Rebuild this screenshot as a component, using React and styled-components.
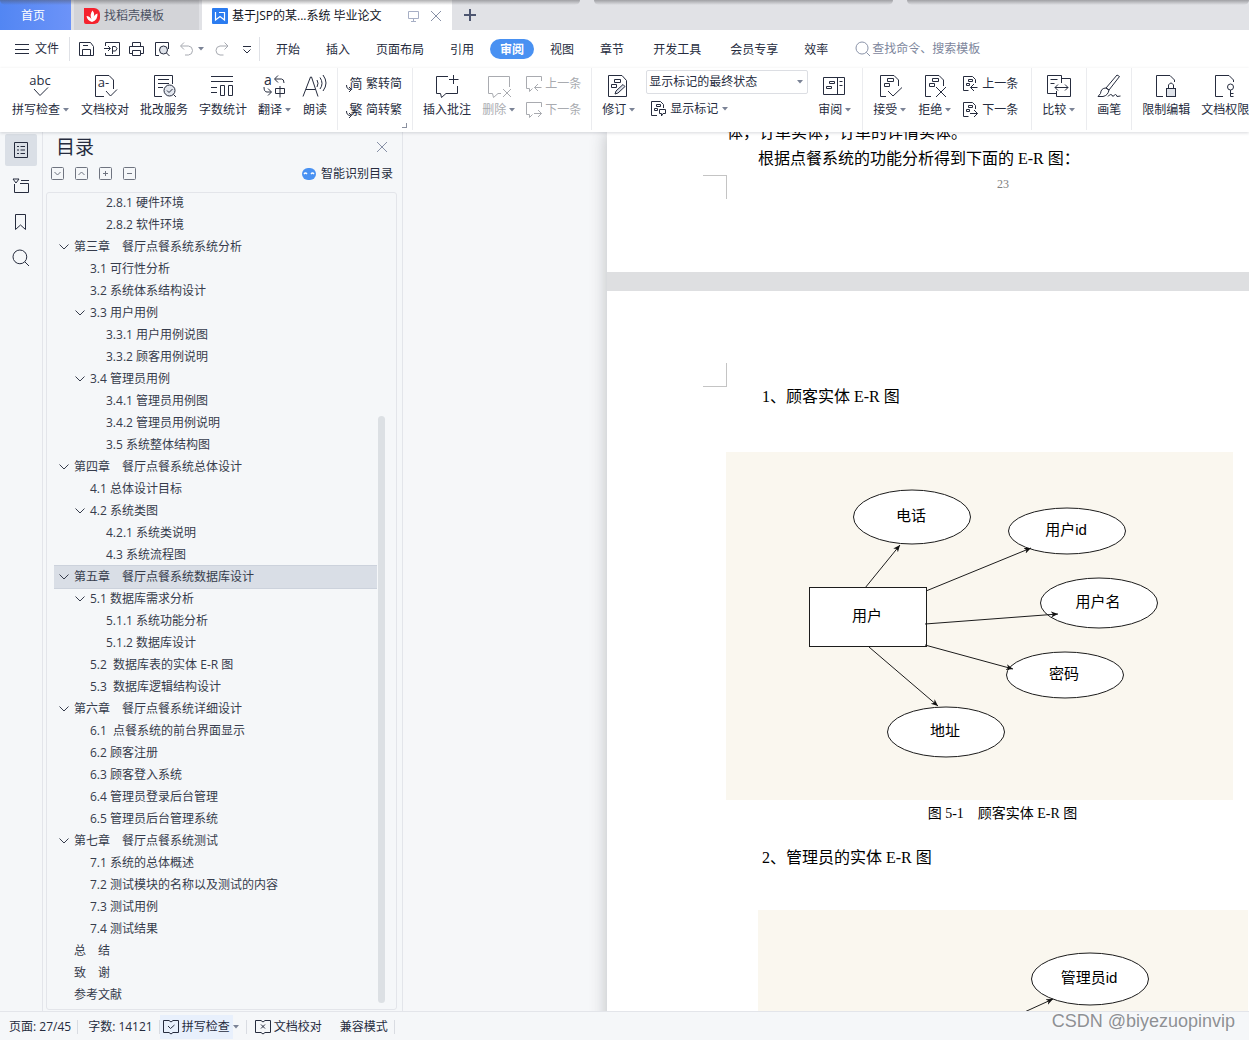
import { useState } from "react";
import styled, { createGlobalStyle, css } from "styled-components";

const GlobalStyle = createGlobalStyle`
  :root {
    --ink: #262c3e;
    --muted: #a9abb0;
    --line: #e3e5ea;
    --panel: #f5f7f9;
    --blue: #4991f2;
    --font-ui: "Open Sans", "Noto Sans CJK SC", sans-serif;
    --font-doc: "Liberation Serif", "Noto Sans CJK SC", serif;
  }

  * {
    box-sizing: border-box;
  }

  body {
    margin: 0;
    background: var(--panel);
    color: var(--ink);
    font-family: var(--font-ui);
    font-size: 12px;
    line-height: 16px;
  }

  button,
  input,
  select {
    margin: 0;
    padding: 0;
    border: 0;
    background: none;
    color: inherit;
    font: inherit;
  }

  button {
    white-space: nowrap;
    cursor: pointer;
  }

  ul,
  p,
  h1,
  h2,
  figure {
    margin: 0;
    padding: 0;
    font-weight: 400;
  }

  ul {
    list-style: none;
  }

  svg {
    display: block;
    flex: none;
    overflow: visible;
  }
`;

const Layout = styled.div`
  display: flex;
  flex-direction: column;
  height: 100vh;
  overflow: hidden;
  position: relative;
`;

/* window tabs */

const TabBar = styled.header`
  display: flex;
  flex: none;
  height: 30px;
  background: #e1e2e6;
`;

const HomeTab = styled.button`
  width: 71px;
  padding: 2px 5px 0 0;
  background: linear-gradient(90deg, #5286f3, #6c93f8);
  color: #fff;
`;

const DocTab = styled.div`
  display: flex;
  align-items: center;
  gap: 4px;
  padding: 2px 10px 0;
  white-space: nowrap;

  ${({ $active }) =>
    $active
      ? css`
          width: 250px;
          background: #fff;
          color: #10131c;
        `
      : css`
          width: 125px;
          margin: 0 3px;
          background: #d3d4d8;
          color: #4c5263;
        `}

  button:nth-of-type(1) {
    margin-left: auto;
  }

  button + button {
    margin-left: 6px;
  }
`;

const AddTab = styled.button`
  width: 36px;
  display: flex;
  align-items: center;
  justify-content: center;
`;

const TopShade = styled.div`
  position: absolute;
  inset: 0 0 auto;
  display: flex;
  gap: 14px;
  pointer-events: none;

  span {
    height: 5px;
    border-radius: 0 0 6px 6px;
    background: linear-gradient(rgba(80, 80, 84, 0.45), rgba(80, 80, 84, 0));
  }
`;

/* menu */

const MenuBar = styled.nav`
  display: flex;
  flex: none;
  align-items: center;
  height: 38px;
  padding-left: 15px;
  background: #fff;
`;

const MenuSep = styled.span`
  width: 1px;
  height: 24px;
  background: #dfe1e6;
`;

const FileButton = styled.button`
  display: flex;
  align-items: center;
  gap: 6px;
  margin-right: 10px;
`;

const QuickTools = styled.div`
  display: flex;
  align-items: center;
  gap: 9px;
  padding: 0 4px 0 9px;

  button {
    display: flex;
    align-items: center;
    gap: 3px;
  }
`;

const MenuTabs = styled.div`
  display: flex;
  gap: 6px;
  padding-left: 6px;
`;

const MenuTab = styled.button`
  height: 20px;
  margin-left: ${({ $spaced }) => ($spaced ? 3 : 0)}px;
  padding: 2px 10px 0;
  border-radius: 10px;

  ${({ $active }) =>
    $active &&
    css`
      background: var(--blue);
      color: #fff;
      font-weight: 700;
    `}
`;

const Search = styled.label`
  display: flex;
  flex: 1;
  align-items: center;
  gap: 2px;
  margin-left: 18px;

  input {
    flex: 1;
    min-width: 0;
    outline: 0;
  }

  input::placeholder {
    color: #7d869c;
    opacity: 1;
  }
`;

/* ribbon */

const RibbonBar = styled.div`
  display: flex;
  flex: none;
  height: 64px;
  padding-left: 2px;
  overflow: hidden;
  background: #fff;
`;

const RibbonWrap = styled.div`
  position: relative;
  z-index: 1;
  flex: none;
  background: #fff;
  box-shadow: 0 1px 3px rgba(60, 66, 80, 0.2);
`;

const Group = styled.div`
  position: relative;
  display: flex;
  flex: none;
  gap: ${({ $gap }) => $gap || 11}px;
  height: 62px;
  padding: 0 ${({ $end }) => $end || 10}px 0 10px;
  border-right: 1px solid #ebecef;

  &:last-child {
    border-right: 0;
  }
`;

const BigButton = styled.button`
  display: flex;
  flex-direction: column;
  align-items: center;
  gap: 4px;
  padding-top: 6px;
  color: ${({ disabled }) => (disabled ? "var(--muted)" : "inherit")};

  span {
    display: flex;
    align-items: center;
    gap: 3px;
  }
`;

const Stack = styled.div`
  display: flex;
  flex-direction: column;
  padding-top: 2px;
`;

const SmallButton = styled.button`
  display: flex;
  align-items: center;
  gap: 4px;
  height: 26px;
  padding-top: 1px;
  padding-left: ${({ $inset }) => ($inset ? 5 : 0)}px;
  color: ${({ disabled }) => (disabled ? "var(--muted)" : "inherit")};
`;

const SelectBox = styled.label`
  display: flex;
  align-items: center;
  width: 162px;
  height: 24px;
  margin-bottom: 1px;
  padding-right: 3px;
  border: 1px solid #dcdee3;
  border-radius: 2px;

  select {
    flex: 1;
    height: 22px;
    padding-left: 2px;
    appearance: none;
    outline: 0;
  }
`;

const CornerMark = styled.i`
  position: absolute;
  right: 5px;
  bottom: 2px;
  width: 5px;
  height: 5px;
  border: solid #8a909f;
  border-width: 0 1px 1px 0;
`;

/* body */

const Main = styled.main`
  display: flex;
  flex: 1;
  min-height: 0;
`;

const Rail = styled.aside`
  display: flex;
  flex: none;
  flex-direction: column;
  gap: 4px;
  width: 43px;
  padding: 2px 5px;
  border-right: 1px solid var(--line);
`;

const RailButton = styled.button`
  display: grid;
  place-items: center;
  width: 32px;
  height: 32px;
  border-radius: 2px;
  background: ${({ $active }) => ($active ? "#dadfe6" : "none")};
`;

const Outline = styled.section`
  display: flex;
  flex: none;
  flex-direction: column;
  width: 360px;
  padding: 0 5px 0 3px;
  border-right: 1px solid var(--line);
`;

const OutlineHead = styled.div`
  display: flex;
  align-items: center;
  justify-content: space-between;
  height: 30px;
  padding: 0 9px 0 10px;

  h2 {
    font-size: 19px;
    line-height: 28px;
  }
`;

const OutlineTools = styled.div`
  display: flex;
  align-items: center;
  gap: 10px;
  height: 24px;
  margin-bottom: 6px;
  padding: 0 4px 0 5px;
`;

const SmartButton = styled.button`
  display: flex;
  align-items: center;
  gap: 5px;
  margin-left: auto;
`;

const TreeBox = styled.div`
  display: flex;
  flex: 1;
  min-height: 0;
  margin-bottom: 1px;
  padding-left: 7px;
  border: 1px solid var(--line);
  border-radius: 3px;
  overflow: hidden;
`;

const Tree = styled.ul`
  flex: 1;
  margin-top: -1px;
`;

const TreeRow = styled.button`
  display: flex;
  align-items: center;
  gap: 4px;
  width: 100%;
  height: 22px;
  padding-left: ${({ $level }) => 4 + $level * 16}px;
  white-space: pre;
  color: #363c4c;
  background: ${({ $active }) => ($active ? "#d9dee6" : "none")};
  box-shadow: ${({ $active }) =>
    $active ? "0 1px #ccd2dc, 0 -1px #ccd2dc" : "none"};
`;

const Twisty = styled.span`
  display: grid;
  place-items: center;
  width: 12px;
`;

const Track = styled.div`
  display: flex;
  flex-direction: column;
  justify-content: flex-end;
  width: 19px;
  padding: 0 11px 6px 1px;

  span {
    height: 72.5%;
    border-radius: 4px;
    background: #dce0e4;
  }
`;

/* document */

const Canvas = styled.section`
  flex: 1;
  min-width: 0;
  padding-left: 204px;
  overflow: hidden;
  background: #f6f7f9;
`;

const Sheets = styled.div`
  display: flex;
  flex-direction: column;
  gap: 19px;
  width: 792px;
  background: #dedfe1;
  box-shadow: 0 0 16px rgba(60, 64, 72, 0.32);
`;

const Sheet = styled.article`
  padding: ${({ $top }) => $top}px 120px ${({ $bottom }) => $bottom}px;
  overflow: hidden;
  background: #fff;
  color: #000;
  font-family: var(--font-doc);
  font-size: 16px;
  line-height: 26px;
  white-space: nowrap;
`;

const Body = styled.div`
  margin: -12px 0 3px;

  p + p {
    padding-left: 31px;
  }
`;

const MarginRow = styled.div`
  display: flex;
  margin-left: -24px;
  color: #808080;
  font-size: 12px;
  line-height: 18px;
  text-align: center;

  span {
    flex: 1;
  }
`;

const CropMark = styled.i`
  width: 24px;
  height: 24px;
  border: solid #c4c4c4;
  border-width: ${({ $foot }) => ($foot ? "1px 1px 0 0" : "0 1px 1px 0")};
`;

const Heading = styled.h2`
  padding-left: 35px;
  font-size: 16px;
  line-height: 20px;
`;

const Figure = styled.figure`
  margin: ${({ $top }) => $top}px 0 20px ${({ $indent }) => $indent}px;

  figcaption {
    font-size: 14px;
    line-height: 28px;
    text-align: center;
  }
`;

const Diagram = styled.svg`
  background: #faf7ef;
  font-family: "Liberation Sans", "Noto Sans CJK SC", sans-serif;
  font-size: 15px;
  text-anchor: middle;

  line,
  ellipse,
  rect {
    stroke: #1c1c1c;
    fill: #fff;
  }
`;

/* status */

const StatusBar = styled.footer`
  display: flex;
  flex: none;
  align-items: center;
  height: 29px;
  padding: 1px 0 0 9px;
  border-top: 1px solid var(--line);
  white-space: nowrap;
`;

const StatusItem = styled.button`
  display: flex;
  align-items: center;
  gap: 3px;
  height: 24px;
  margin-left: ${({ $before }) => $before || 0}px;
  padding: 0 ${({ $active }) => ($active ? 3 : 0)}px;
  background: ${({ $active }) => ($active ? "#e8f0fc" : "none")};
`;

const StatusSep = styled.span`
  width: 1px;
  height: 14px;
  margin: 0 ${({ $after }) => $after || 0}px 0 6px;
  background: #d9dce2;
`;

const Watermark = styled.div`
  position: absolute;
  right: 14px;
  bottom: 8px;
  color: #8e9094;
  font-family: "Liberation Sans", sans-serif;
  font-size: 18px;
  line-height: 22px;
  text-shadow: 0 0 2px #fff;
`;

/* icons */

const Svg = ({ w = 24, h = 24, color = "currentColor", children }) => (
  <svg
    width={w}
    height={h}
    viewBox={`0 0 ${w} ${h}`}
    fill="none"
    stroke={color}
    strokeWidth="1"
    aria-hidden="true"
  >
    {children}
  </svg>
);

const Caret = () => (
  <svg width="7" height="4" viewBox="0 0 7 4" fill="#7b8396" aria-hidden="true">
    <path d="M0 0h6L3 3.500z" />
  </svg>
);

const Glyph = ({ x, y, size, children }) => (
  <text
    x={x}
    y={y}
    fontSize={size}
    fill="currentColor"
    stroke="none"
    textAnchor="middle"
  >
    {children}
  </text>
);

const pageEdge = "M8 22.5H2.5V1.5H16l4.5 4.5V12";
const marks = <path d="M9.5 4.5h6v3h-6zM6.5 9.500h5v3h-5z" />;

const bigIcons = {
  spell: (
    <>
      <Glyph x={11} y={11} size={13}>
        abc
      </Glyph>
      <path d="m5 15 6 6.500 8-8" />
    </>
  ),
  proof: (
    <>
      <path d="M11 22.5H2.500v-21H16l4.500 4.500V15" />
      <Glyph x={10.5} y={13} size={13}>
        a-
      </Glyph>
      <path d="m13 17 4.500 5 6.500-6.500" />
    </>
  ),
  correct: (
    <>
      <path d="M10 22.500H2.500v-21h18V10M6 5.500h11M6 9.500h11M6 13.500h5" />
      <circle cx="17.500" cy="16.500" r="5.500" fill="#e3e7ee" />
      <path d="m15 16.500 2 2 3.500-3.500M21.500 20.500l2.500 2.500" />
    </>
  ),
  count: (
    <path d="M0 2.500h22M0 7.500h22M0 13.500h6M0 18.500h6M9.500 11.500h4v10h-4zM17.500 11.500h4v10h-4z" />
  ),
  translate: (
    <>
      <Glyph x={5} y={11} size={14}>
        a
      </Glyph>
      <path d="M15 1.500 11.500 5l3.500 3.500M12 5h6.500q2.500 0 2.500 4M1 13q0 5 3 5h4M5 14.500l3.500 3.500L5 21.500" />
      <path d="M12.500 14.500h9v5h-9zM17 12v11.500" />
    </>
  ),
  read: (
    <path d="M0 22.500 7.500 3h1L15 22.500M3 15.500h9.500M14 6q2 3 0 7M17 3.500q4 6 0 11.500M20 1q6 8 0 16" />
  ),
  comment: (
    <path d="M13 2.500H1.500v17h4l1 4 4.500-4h11.500V12M18.500 1v9M14 5.500h9.500" />
  ),
  remove: (
    <path d="M22.500 13V2.500H1.500v17h4l1 4 4.500-4h3M16 15l8 8M24 15l-8 8" />
  ),
  revise: (
    <>
      <path d="M1.500 1.500H15l4.500 5v16h-18z" />
      <path d="M7.500 5.500h6v3h-6zM4.500 10.500h5v3h-5z" />
      <path d="m8 20 1-3 7-6.500 2 2L11 19z" fill="#dfe3ec" />
    </>
  ),
  review: (
    <path d="M.500 3.500h21v17H.500zM14.500 3.500v17M6.500 7.500h5v2h-5zM3.500 12.500h5v2h-5zM16.500 7.500h3M16.500 11.500h3" />
  ),
  accept: (
    <>
      <path d={pageEdge} />
      {marks}
      <path d="m10 17 5 5 9-8.500" />
    </>
  ),
  reject: (
    <>
      <path d={pageEdge} />
      {marks}
      <path d="m13 13 10 10M23 13 13 23" />
    </>
  ),
  compare: (
    <>
      <path d="M14.500 9V1.500H.500v18h9M14.500 4.500h9v18h-14V17M3.500 5.500h7M3.500 9.500h4" />
      <path d="M8 13.500h13M11 10.500l-3 3 3 3M18 10.500l3 3-3 3" />
    </>
  ),
  pen: (
    <>
      <path d="M9 14 20 1l2.500 1.500L12 16z" />
      <path d="M9 14q-5 0-5.500 5.500L1 22.500h5q5-1 6-6.500zM11 22.500q3-4 5 0 3-4 4 0l3.500-.500" />
    </>
  ),
  lock: (
    <>
      <path d="M9 22.500H2.500v-21H16l4.500 4.500V8" />
      <rect x="12.500" y="14.500" width="9" height="8" fill="#dfe3ea" />
      <path d="M14.500 14.500V11q2.500-4 5 0v3.500" />
    </>
  ),
  key: (
    <>
      <path d="M10 22.500H2.500v-21H16l4.500 4.500V8" />
      <circle cx="17.500" cy="13" r="3" />
      <path d="M17.500 16v6.500h3M17.500 19.500h3" />
    </>
  ),
};

const SmallNote = ({ back, doc }) => (
  <Svg w={doc ? 15 : 14} h={16}>
    {doc ? (
      <path d="M5.500 14.500h-5v-14h9l3 3V7M5.500 3.500h4v2h-4zM3.500 7.500h3v2h-3z" />
    ) : (
      <path d="M14.500 5V.500H-.500v12h3V15.500l3-3" />
    )}
    <path
      d={
        back
          ? "M14.500 11.500h-7M11 8l-3.500 3.500L11 15"
          : "M7 11.500h7.500M11 8l3.500 3.500L11 15"
      }
    />
  </Svg>
);

const Swap = ({ children }) => (
  <Svg w={14} h={16}>
    <Glyph x={8} y={12} size={13}>
      {children}
    </Glyph>
    <path d="M-1.500 9q0 4.500 4 4.500M1 11l2.500 2.500L1 16" />
  </Svg>
);

const Close = ({ color = "#8790a6" }) => (
  <Svg w={12} h={12} color={color}>
    <path d="m1 1 10 10M11 1 1 11" />
  </Svg>
);

const Boxed = ({ d }) => (
  <Svg w={14} h={14} color="#6f7480">
    <rect x=".5" y=".5" width="12" height="12" rx="1" />
    <path d={d} />
  </Svg>
);

const Lens = ({ size = 16, color }) => (
  <Svg w={size} h={size} color={color}>
    <circle cx={size * 0.43} cy={size * 0.43} r={size * 0.43} />
    <path d={`M${size * 0.74} ${size * 0.74}L${size} ${size}`} />
  </Svg>
);

const Book = ({ d }) => (
  <Svg w={16} h={16}>
    <path d="M6 1.500H.500v12H6L8 15l2-1.500h5.500v-12H10L8 3z" />
    <path d={d} />
  </Svg>
);

/* data */

const menus = [
  { label: "开始" },
  { label: "插入" },
  { label: "页面布局" },
  { label: "引用" },
  { label: "审阅" },
  { label: "视图" },
  { label: "章节" },
  { label: "开发工具", spaced: true },
  { label: "会员专享", spaced: true },
  { label: "效率" },
];

// [level, label, has children]
const outline = [
  [2, "2.8.1 硬件环境"],
  [2, "2.8.2 软件环境"],
  [0, "第三章　餐厅点餐系统系统分析", true],
  [1, "3.1 可行性分析"],
  [1, "3.2 系统体系结构设计"],
  [1, "3.3 用户用例", true],
  [2, "3.3.1 用户用例说图"],
  [2, "3.3.2 顾客用例说明"],
  [1, "3.4 管理员用例", true],
  [2, "3.4.1 管理员用例图"],
  [2, "3.4.2 管理员用例说明"],
  [2, "3.5 系统整体结构图"],
  [0, "第四章　餐厅点餐系统总体设计", true],
  [1, "4.1 总体设计目标"],
  [1, "4.2 系统类图", true],
  [2, "4.2.1 系统类说明"],
  [2, "4.3 系统流程图"],
  [0, "第五章　餐厅点餐系统数据库设计", true],
  [1, "5.1 数据库需求分析", true],
  [2, "5.1.1 系统功能分析"],
  [2, "5.1.2 数据库设计"],
  [1, "5.2  数据库表的实体 E-R 图"],
  [1, "5.3  数据库逻辑结构设计"],
  [0, "第六章　餐厅点餐系统详细设计", true],
  [1, "6.1  点餐系统的前台界面显示"],
  [1, "6.2 顾客注册"],
  [1, "6.3 顾客登入系统"],
  [1, "6.4 管理员登录后台管理"],
  [1, "6.5 管理员后台管理系统"],
  [0, "第七章　餐厅点餐系统测试", true],
  [1, "7.1 系统的总体概述"],
  [1, "7.2 测试模块的名称以及测试的内容"],
  [1, "7.3 测试用例"],
  [1, "7.4 测试结果"],
  [0, "总　结"],
  [0, "致　谢"],
  [0, "参考文献"],
];

const userNodes = [
  { label: "电话", cx: 185, cy: 65, ry: 27 },
  { label: "用户id", cx: 340, cy: 79, ry: 23 },
  { label: "用户名", cx: 372, cy: 151, ry: 25 },
  { label: "密码", cx: 338, cy: 223, ry: 23 },
  { label: "地址", cx: 219, cy: 280, ry: 25 },
];

const userLinks = [
  [137, 136, 172, 93],
  [198, 139, 303, 96],
  [197, 172, 330, 162],
  [197, 193, 285, 217],
  [141, 195, 210, 254],
];

const Tool = ({ icon, label, menu, disabled }) => (
  <BigButton type="button" disabled={disabled}>
    <Svg>{bigIcons[icon]}</Svg>
    <span>
      {label}
      {menu && <Caret />}
    </span>
  </BigButton>
);

const ErDiagram = ({ width, nodes, links, entity }) => (
  <Diagram width={width} height="348" viewBox={`0 0 ${width} 348`}>
    <defs>
      <marker
        id="arrow"
        markerWidth="8"
        markerHeight="8"
        refX="7"
        refY="4"
        orient="auto"
      >
        <path d="M0 1l7 3-7 3 2-3z" fill="#111" />
      </marker>
    </defs>
    {entity && (
      <g>
        <rect x="83.5" y="135.500" width="117" height="59" />
        <text x="141" y="169">
          {entity}
        </text>
      </g>
    )}
    {nodes.map(({ label, cx, cy, ry }) => (
      <g key={label}>
        <ellipse cx={cx + 1} cy={cy} rx="58.500" ry={ry} />
        <text x={cx} y={cy + 4}>
          {label}
        </text>
      </g>
    ))}
    {links.map(([x1, y1, x2, y2]) => (
      <line
        key={`${x1}-${y1}`}
        x1={x1 + 2}
        y1={y1}
        x2={x2 + 2}
        y2={y2}
        markerEnd="url(#arrow)"
      />
    ))}
  </Diagram>
);

const WindowTabs = () => (
  <TabBar>
    <HomeTab type="button">首页</HomeTab>
    <DocTab>
      <svg width="16" height="16" viewBox="0 0 16 16" aria-hidden="true">
        <path
          d="M0 0h10a6 6 0 0 1 6 6v4a6 6 0 0 1-6 6H2a2 2 0 0 1-2-2z"
          fill="#f5222d"
        />
        <path
          d="M8 14Q3 12.500 2.500 8q3.500 0 5 3.500Q5.500 6 8.500 2.500q3 3 .500 8 1-4 4.500-5Q14 12 8 14z"
          fill="#fff"
        />
      </svg>
      找稻壳模板
    </DocTab>
    <DocTab $active>
      <svg width="16" height="16" viewBox="0 0 16 16" aria-hidden="true">
        <rect width="16" height="16" rx="1" fill="#2b7cf0" />
        <path
          d="M3.500 4v8L8 8.500l4.500 3.500V4.500H7"
          fill="none"
          stroke="#fff"
          strokeWidth="1.200"
        />
      </svg>
      基于JSP的某...系统 毕业论文
      <button type="button" aria-label="窗口">
        <Svg w={12} h={12} color="#a7afc5">
          <path d="M.500 1.500h10v7h-10zM5.500 8.500v3M3 11.500h5" />
        </Svg>
      </button>
      <button type="button" aria-label="关闭标签">
        <Close />
      </button>
    </DocTab>
    <AddTab type="button" aria-label="新建标签">
      <Svg w={12} h={12} color="#4d5670">
        <path d="M6 0v12M0 6h12" strokeWidth="2" />
      </Svg>
    </AddTab>
    <TopShade>
      <span style={{ width: "46.400%" }} />
      <span style={{ width: "24%" }} />
      <span style={{ flex: 1 }} />
    </TopShade>
  </TabBar>
);

const Menu = () => {
  const [active, setActive] = useState("审阅");

  return (
    <MenuBar>
      <FileButton type="button">
        <Svg w={14} h={12}>
          <path d="M0 1.500h14M0 6.500h14M0 10.500h14" />
        </Svg>
        文件
      </FileButton>
      <MenuSep />
      <QuickTools>
        <button type="button" aria-label="保存">
          <Svg w={16} h={16}>
            <path d="M.500 1.500h11l3 4v9H.500zM3.500 14V8.500h8v6M4 4.500h5" />
          </Svg>
        </button>
        <button type="button" aria-label="输出为PDF">
          <Svg w={16} h={16}>
            <path d="M1.500 5V1.500h14v13h-14V12M0 7.500h6M4 5l2.500 2.500L4 10M8.500 13V5.500h3q3 2 0 4.500h-3" />
          </Svg>
        </button>
        <button type="button" aria-label="打印">
          <Svg w={16} h={16}>
            <path d="M3.500 5V1.500h8V5M3 12.500H.500v-7h14v7H12M3.500 9.500h8v5h-8z" />
          </Svg>
        </button>
        <button type="button" aria-label="打印预览">
          <Svg w={16} h={16}>
            <path d="M5 14.500H1.500v-13h13V8" />
            <circle cx="9.500" cy="9" r="4" fill="#dfe3ea" />
            <path d="m12.500 12 3 3" />
          </Svg>
        </button>
        <button type="button" aria-label="撤销">
          <Svg w={16} h={16} color="#a6a9b0">
            <path d="M5 1.500 1.500 5 5 8.500M2 5h7.500q4 .500 4 4.500t-4 4.500H6" />
          </Svg>
          <Caret />
        </button>
        <button type="button" aria-label="恢复">
          <Svg w={16} h={16} color="#a6a9b0">
            <path d="m10.500 1.500 3.500 3.500-3.500 3.500M13.500 5H6Q2 5.500 2 9.500T6 14h3.500" />
          </Svg>
        </button>
        <button type="button" aria-label="自定义快速访问工具栏">
          <Svg w={16} h={16}>
            <path d="M4 5.500h8M4.500 8.500 8 12l3.500-3.500" />
          </Svg>
        </button>
      </QuickTools>
      <MenuSep />
      <MenuTabs>
        {menus.map(({ label, spaced }) => (
          <MenuTab
            key={label}
            type="button"
            $spaced={spaced}
            $active={label === active}
            onClick={() => setActive(label)}
          >
            {label}
          </MenuTab>
        ))}
      </MenuTabs>
      <Search>
        <Lens size={14} color="#8b94a9" />
        <input
          type="text"
          placeholder="查找命令、搜索模板"
          aria-label="查找命令、搜索模板"
        />
      </Search>
    </MenuBar>
  );
};

const Ribbon = () => (
  <RibbonWrap>
    <RibbonBar>
      <Group>
        <Tool icon="spell" label="拼写检查" menu />
        <Tool icon="proof" label="文档校对" />
        <Tool icon="correct" label="批改服务" />
        <Tool icon="count" label="字数统计" />
        <Tool icon="translate" label="翻译" menu />
        <Tool icon="read" label="朗读" />
      </Group>
      <Group>
        <Stack>
          <SmallButton type="button">
            <Swap>简</Swap>
            繁转简
          </SmallButton>
          <SmallButton type="button">
            <Swap>繁</Swap>
            简转繁
          </SmallButton>
        </Stack>
        <CornerMark />
      </Group>
      <Group>
        <Tool icon="comment" label="插入批注" />
        <Tool icon="remove" label="删除" menu disabled />
        <Stack>
          <SmallButton type="button" disabled>
            <SmallNote back />
            上一条
          </SmallButton>
          <SmallButton type="button" disabled>
            <SmallNote />
            下一条
          </SmallButton>
        </Stack>
      </Group>
      <Group $gap={10}>
        <Tool icon="revise" label="修订" menu />
        <Stack>
          <SelectBox>
            <select aria-label="标记显示状态">
              <option>显示标记的最终状态</option>
            </select>
            <Caret />
          </SelectBox>
          <SmallButton type="button" $inset>
            <Svg w={15} h={16}>
              <path d="M6 14.500H.500v-14h9l3 3V7M5.500 3.500h4v2h-4zM3.500 7.500h3v2h-3zM8.500 8.500h6v4H12L10.500 15v-2.500h-2z" />
            </Svg>
            显示标记
            <Caret />
          </SmallButton>
        </Stack>
        <Tool icon="review" label="审阅" menu />
      </Group>
      <Group $end={13}>
        <Tool icon="accept" label="接受" menu />
        <Tool icon="reject" label="拒绝" menu />
        <Stack>
          <SmallButton type="button">
            <SmallNote back doc />
            上一条
          </SmallButton>
          <SmallButton type="button">
            <SmallNote doc />
            下一条
          </SmallButton>
        </Stack>
      </Group>
      <Group>
        <Tool icon="compare" label="比较" menu />
      </Group>
      <Group>
        <Tool icon="pen" label="画笔" />
      </Group>
      <Group>
        <Tool icon="lock" label="限制编辑" />
        <Tool icon="key" label="文档权限" />
      </Group>
    </RibbonBar>
  </RibbonWrap>
);

const SideRail = () => (
  <Rail>
    <RailButton type="button" aria-label="目录" $active>
      <Svg w={16} h={16}>
        <path d="M1.500.500h13v15h-13zM4 4.500h2M7.500 4.500H12M4 8h2M7.500 8H12M4 11.500h2M7.500 11.500H12" />
      </Svg>
    </RailButton>
    <RailButton type="button" aria-label="章节">
      <Svg w={16} h={16}>
        <path d="M0 1h6L3 5zM8 2.500h8M1.500 6v8.500h14v-9H7" />
      </Svg>
    </RailButton>
    <RailButton type="button" aria-label="书签">
      <Svg w={16} h={16}>
        <path d="M2.500.500h10v15L7.500 11l-5 4.500z" />
      </Svg>
    </RailButton>
    <RailButton type="button" aria-label="查找">
      <Lens />
    </RailButton>
  </Rail>
);

const OutlinePanel = () => {
  const [selected, setSelected] = useState(17);

  return (
    <Outline>
      <OutlineHead>
        <h2>目录</h2>
        <button type="button" aria-label="关闭目录">
          <Close />
        </button>
      </OutlineHead>
      <OutlineTools>
        <button type="button" aria-label="展开">
          <Boxed d="m3.500 5 3 3 3-3" />
        </button>
        <button type="button" aria-label="收起">
          <Boxed d="m3.500 8 3-3 3 3" />
        </button>
        <button type="button" aria-label="提升级别">
          <Boxed d="M4 6.500h5M6.500 4v5" />
        </button>
        <button type="button" aria-label="降低级别">
          <Boxed d="M4 6.500h5" />
        </button>
        <SmartButton type="button">
          <svg width="14" height="12" viewBox="0 0 14 12" aria-hidden="true">
            <rect width="14" height="12" rx="6" fill="#4991f2" />
            <path
              d="M2 6q1.500-2 3 0M9 6q1.500-2 3 0"
              fill="none"
              stroke="#fff"
              strokeWidth="1.300"
            />
          </svg>
          智能识别目录
        </SmartButton>
      </OutlineTools>
      <TreeBox>
        <Tree>
          {outline.map(([level, label, open], i) => (
            <li key={label}>
              <TreeRow
                type="button"
                $level={level}
                $active={i === selected}
                onClick={() => setSelected(i)}
              >
                <Twisty>
                  {open && (
                    <Svg w={10} h={6}>
                      <path d="m.500.500 4.500 4.500L9.500.500" />
                    </Svg>
                  )}
                </Twisty>
                {label}
              </TreeRow>
            </li>
          ))}
        </Tree>
        <Track>
          <span />
        </Track>
      </TreeBox>
    </Outline>
  );
};

const DocumentView = () => (
  <Canvas>
    <Sheets>
      <Sheet $top={0} $bottom={73}>
        <Body>
          <p>体，订单实体，订单的详情实体。</p>
          <p>根据点餐系统的功能分析得到下面的 E-R 图：</p>
        </Body>
        <MarginRow>
          <CropMark $foot />
          <span>23</span>
        </MarginRow>
      </Sheet>
      <Sheet $top={72} $bottom={96}>
        <MarginRow>
          <CropMark />
        </MarginRow>
        <Heading>1、顾客实体 E-R 图</Heading>
        <Figure $top={45} $indent={-1}>
          <ErDiagram
            width={507}
            nodes={userNodes}
            links={userLinks}
            entity="用户"
          />
          <figcaption>图 5-1　顾客实体 E-R 图</figcaption>
        </Figure>
        <Heading>2、管理员的实体 E-R 图</Heading>
        <Figure $top={42} $indent={31}>
          <ErDiagram
            width={490}
            nodes={[{ label: "管理员id", cx: 331, cy: 69, ry: 26 }]}
            links={[[236, 115, 293, 89]]}
          />
        </Figure>
      </Sheet>
    </Sheets>
  </Canvas>
);

const Status = () => (
  <StatusBar>
    <StatusItem type="button">页面: 27/45</StatusItem>
    <StatusSep $after={10} />
    <StatusItem type="button">字数: 14121</StatusItem>
    <StatusSep />
    <StatusItem type="button" $active>
      <Book d="m5 7 2.500 2.500L11.500 6" />
      拼写检查
    </StatusItem>
    <Caret />
    <StatusSep $after={8} />
    <StatusItem type="button">
      <Book d="m6 5.500 4 4M10 5.500l-4 4" />
      文档校对
    </StatusItem>
    <StatusItem type="button" $before={18}>
      兼容模式
    </StatusItem>
    <StatusSep />
  </StatusBar>
);

const App = () => (
  <>
    <GlobalStyle />
    <Layout>
      <WindowTabs />
      <Menu />
      <Ribbon />
      <Main>
        <SideRail />
        <OutlinePanel />
        <DocumentView />
      </Main>
      <Status />
      <Watermark>CSDN @biyezuopinvip</Watermark>
    </Layout>
  </>
);

export default App;
